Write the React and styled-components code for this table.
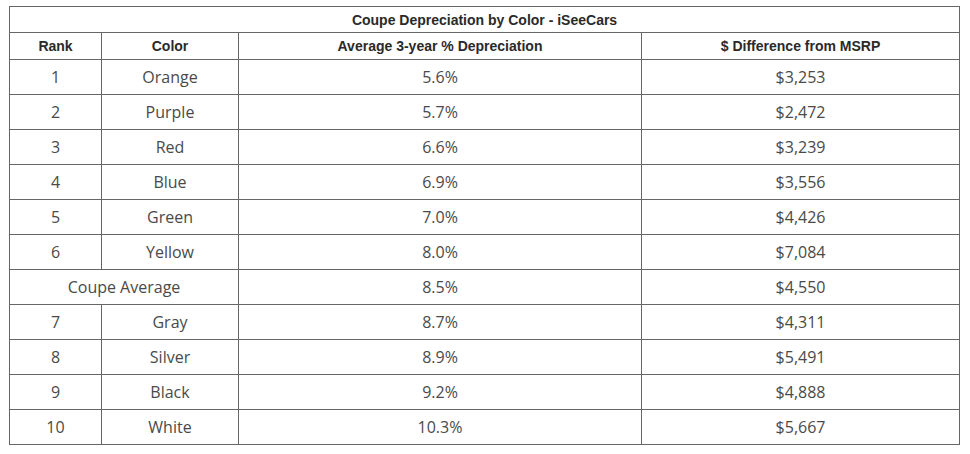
import styled, { createGlobalStyle } from "styled-components";

const GlobalStyle = createGlobalStyle`
  body {
    margin: 0;
    background: #fff;
  }
`;

const rows = [
  { rank: "1", color: "Orange", dep: "5.6%", diff: "$3,253" },
  { rank: "2", color: "Purple", dep: "5.7%", diff: "$2,472" },
  { rank: "3", color: "Red", dep: "6.6%", diff: "$3,239" },
  { rank: "4", color: "Blue", dep: "6.9%", diff: "$3,556" },
  { rank: "5", color: "Green", dep: "7.0%", diff: "$4,426" },
  { rank: "6", color: "Yellow", dep: "8.0%", diff: "$7,084" },
  { average: true, color: "Coupe Average", dep: "8.5%", diff: "$4,550" },
  { rank: "7", color: "Gray", dep: "8.7%", diff: "$4,311" },
  { rank: "8", color: "Silver", dep: "8.9%", diff: "$5,491" },
  { rank: "9", color: "Black", dep: "9.2%", diff: "$4,888" },
  { rank: "10", color: "White", dep: "10.3%", diff: "$5,667" },
];

export default function App() {
  return (
    <Page>
      <GlobalStyle />
      <Table>
        <colgroup>
          <col style={{ width: 92 }} />
          <col style={{ width: 137 }} />
          <col style={{ width: 403 }} />
          <col style={{ width: 318 }} />
        </colgroup>
        <thead>
          <tr>
            <HeadCell colSpan={4} $height={25}>
              Coupe Depreciation by Color - iSeeCars
            </HeadCell>
          </tr>
          <tr>
            <HeadCell $height={26}>Rank</HeadCell>
            <HeadCell $height={26}>Color</HeadCell>
            <HeadCell $height={26}>Average 3-year % Depreciation</HeadCell>
            <HeadCell $height={26}>$ Difference from MSRP</HeadCell>
          </tr>
        </thead>
        <tbody>
          {rows.map((r) => (
            <tr key={r.color}>
              {r.average ? (
                <Cell colSpan={2}>{r.color}</Cell>
              ) : (
                <>
                  <Cell>{r.rank}</Cell>
                  <Cell>{r.color}</Cell>
                </>
              )}
              <Cell>{r.dep}</Cell>
              <Cell>{r.diff}</Cell>
            </tr>
          ))}
        </tbody>
      </Table>
    </Page>
  );
}

const Page = styled.div`
  padding: 6px 0 0 9px;
`;

const Table = styled.table`
  width: 951px;
  border-collapse: collapse;
  table-layout: fixed;

  td,
  th {
    border: 1px solid #666;
    text-align: center;
    padding: 0;
  }
`;

const HeadCell = styled.th`
  height: ${(p) => p.$height}px;
  font-family: "Liberation Sans", Arial, sans-serif;
  font-size: 14px;
  font-weight: bold;
  color: #2a2a2a;
`;

const Cell = styled.td`
  height: 34px;
  font-family: "Open Sans", sans-serif;
  font-size: 16px;
  color: #4a4a4a;
`;
